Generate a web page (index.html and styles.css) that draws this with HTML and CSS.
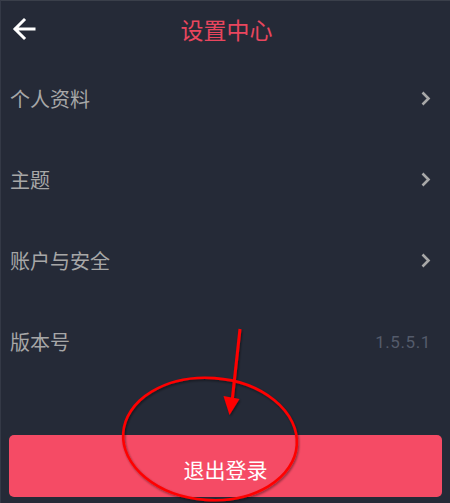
FILE: index.html
```html
<!DOCTYPE html>
<html lang="zh-CN">
<head>
<meta charset="utf-8">
<title>设置中心</title>
<link rel="stylesheet" href="styles.css">
</head>
<body>
<div class="screen">
  <header class="topbar">
    <span class="back">
      <svg width="24" height="24" viewBox="0 0 24 24"><path d="M22 12H3.5M12 3L3 12l9 9" fill="none" stroke="#fff" stroke-width="3" stroke-linecap="square" stroke-linejoin="miter"/></svg>
    </span>
    <h1 class="title">设置中心</h1>
  </header>
  <ul class="list">
    <li class="row"><span class="label">个人资料</span><svg class="chev" width="12" height="15" viewBox="0 0 12 15"><path d="M2.5 1.5l6 6-6 6" fill="none" stroke="#a8a8a8" stroke-width="2.6"/></svg></li>
    <li class="row"><span class="label">主题</span><svg class="chev" width="12" height="15" viewBox="0 0 12 15"><path d="M2.5 1.5l6 6-6 6" fill="none" stroke="#a8a8a8" stroke-width="2.6"/></svg></li>
    <li class="row"><span class="label">账户与安全</span><svg class="chev" width="12" height="15" viewBox="0 0 12 15"><path d="M2.5 1.5l6 6-6 6" fill="none" stroke="#a8a8a8" stroke-width="2.6"/></svg></li>
    <li class="row"><span class="label">版本号</span><span class="version">1.5.5.1</span></li>
  </ul>
  <div class="actions">
    <button class="logout">退出登录</button>
  </div>
  <svg class="annot" width="450" height="503" viewBox="0 0 450 503">
    <defs>
      <filter id="sh" x="-10%" y="-10%" width="120%" height="120%">
        <feDropShadow dx="1" dy="1.5" stdDeviation="1.2" flood-color="#000" flood-opacity="0.45"/>
      </filter>
    </defs>
    <g filter="url(#sh)">
      <ellipse cx="210" cy="439" rx="87" ry="61" transform="rotate(4 210 439)" fill="none" stroke="#f00" stroke-width="2.6"/>
      <path d="M240 329L232 402" stroke="#f00" stroke-width="3" fill="none"/>
      <path d="M223.5 396L239.5 399L229.5 415Z" fill="#f00"/>
    </g>
  </svg>
</div>
</body>
</html>
```
FILE: styles.css
```css
* { box-sizing: border-box; }
html, body { margin: 0; padding: 0; }
body {
  background: #252a37;
  font-family: "Noto Sans CJK SC", "Noto Sans", "Liberation Sans", sans-serif;
}
.screen {
  position: relative;
  width: 450px;
  height: 503px;
  background: #252a37;
  border-top: 1px solid #3a3f4a;
  border-left: 1px solid #343946;
  overflow: hidden;
}
.topbar {
  height: 57px;
  display: flex;
  align-items: center;
  justify-content: center;
  position: relative;
}
.back {
  position: absolute;
  left: 11px;
  top: 16px;
  width: 24px;
  height: 24px;
  display: flex;
}
.title {
  margin: 0;
  font-size: 23px;
  font-weight: 400;
  color: #e9465e;
  line-height: 1;
  padding-left: 2px;
}
.list {
  list-style: none;
  margin: 0;
  padding: 0;
}
.row {
  height: 81px;
  display: flex;
  align-items: center;
  justify-content: space-between;
  padding: 0 18px 0 9px;
}
.label {
  font-size: 20px;
  color: #a7a7a7;
  line-height: 1;
}
.chev { display: block; }
.version {
  font-family: "Roboto", "Liberation Sans", sans-serif;
  font-size: 17px;
  color: #545b6b;
  letter-spacing: 0.6px;
  margin-right: 1px;
}
.actions {
  padding: 53px 8px 0 8px;
}
.logout {
  display: block;
  width: 100%;
  height: 62px;
  border: 0;
  border-radius: 5px;
  background: #f54b65;
  color: #fff;
  font-family: inherit;
  font-size: 21px;
  padding: 6px 0 0;
}
.annot {
  position: absolute;
  left: -1px;
  top: -1px;
  pointer-events: none;
}
```
